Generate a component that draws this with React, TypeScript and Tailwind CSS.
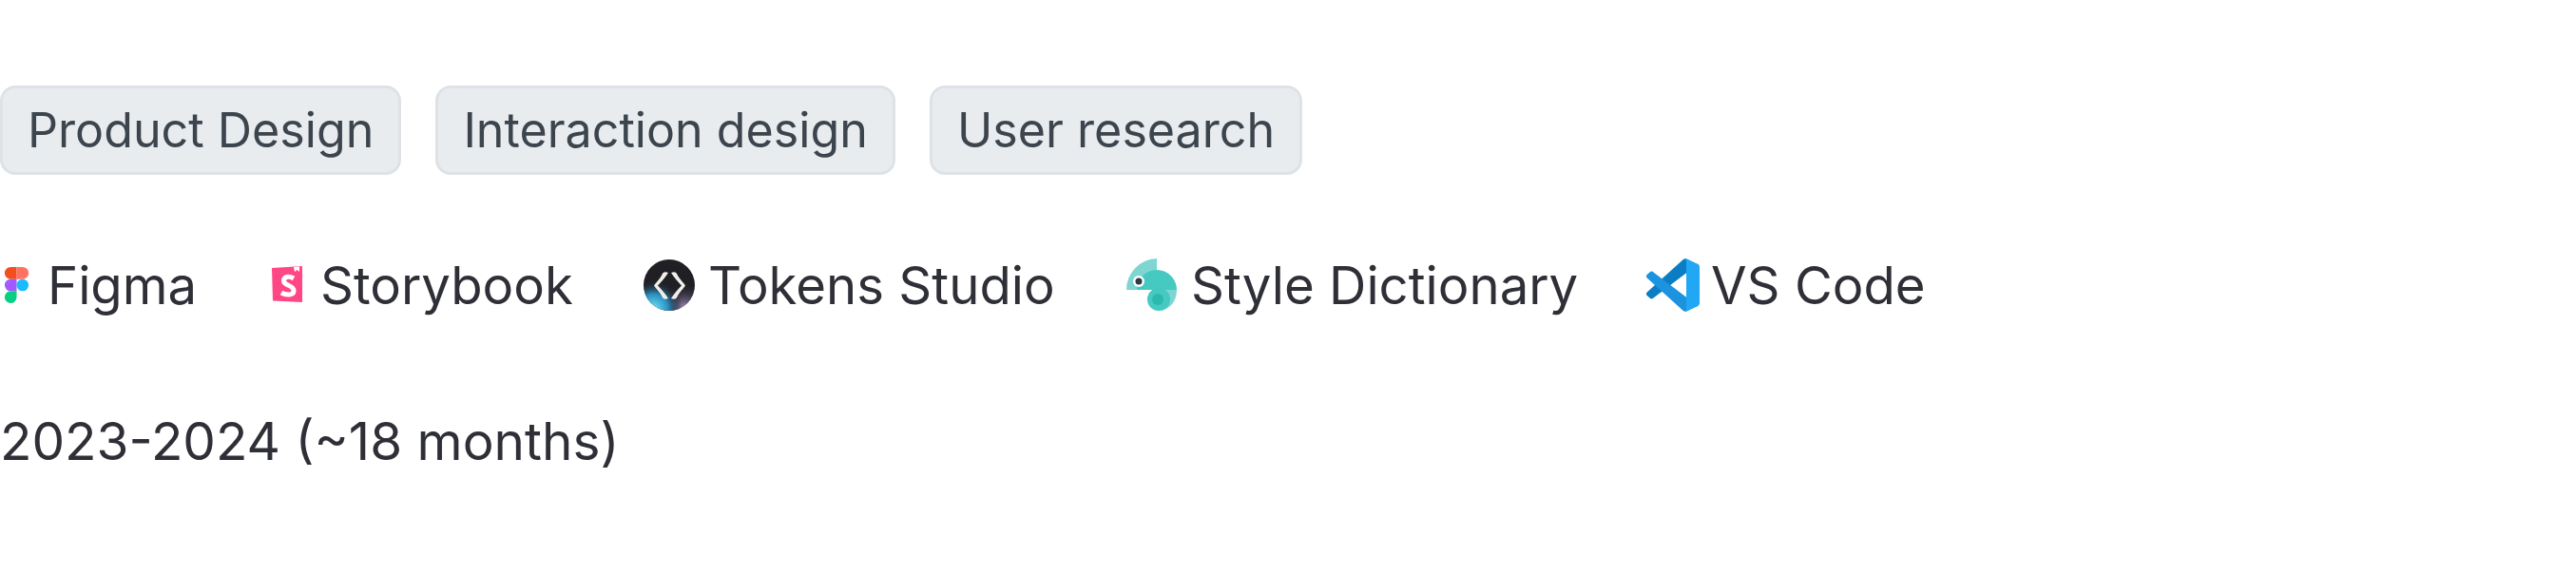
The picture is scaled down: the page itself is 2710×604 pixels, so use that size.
import React from 'react';

const FigmaIcon = () => (
  <svg width="30" height="38" viewBox="0 0 30 38" className="shrink-0">
    <path d="M11.250 0h6.250v12.670h-6.250a6.330 6.330 0 0 1 0-12.670z" fill="#f24e1e" />
    <path d="M17.500 0h6.250a6.330 6.330 0 0 1 0 12.670h-6.250z" fill="#ff7262" />
    <path d="M11.250 12.670h6.250v12.660h-6.250a6.330 6.330 0 0 1 0-12.660z" fill="#a259ff" />
    <circle cx="23.750" cy="19" r="6.330" fill="#1abcfe" />
    <path d="M11.250 25.330h6.250v6.340a6.330 6.330 0 1 1-6.250-6.340z" fill="#0acf83" />
  </svg>
);

const StorybookIcon = () => (
  <svg width="36" height="40" viewBox="0 0 36 40" className="shrink-0">
    <path d="M1 2l32-2v38L2 36.500z" fill="#ff4785" />
    <path d="M24 1l6-.400v5.400l-2.500-2-2.500 2z" fill="#fff" />
    <path
      d="M24 13C19 10 13.500 11 13.500 15.500C13.500 21 24 19.500 24 26C24 31 16 31 11 28"
      fill="none"
      stroke="#fff"
      strokeWidth="5"
    />
  </svg>
);

const TokensIcon = () => (
  <svg width="54" height="54" viewBox="0 0 54 54" className="shrink-0">
    <defs>
      <radialGradient id="tokensBlue" cx="0.2" cy="0.95" r="0.55">
        <stop offset="0" stopColor="#6fe0f5" />
        <stop offset="0.5" stopColor="#2a8fc0" />
        <stop offset="1" stopColor="#201f26" stopOpacity="0" />
      </radialGradient>
      <radialGradient id="tokensPurple" cx="0.8" cy="0.95" r="0.5">
        <stop offset="0" stopColor="#a893c4" />
        <stop offset="1" stopColor="#201f26" stopOpacity="0" />
      </radialGradient>
    </defs>
    <circle cx="27" cy="27" r="27" fill="#201f24" />
    <circle cx="27" cy="27" r="27" fill="url(#tokensPurple)" />
    <circle cx="27" cy="27" r="27" fill="url(#tokensBlue)" />
    <path
      d="M26 14C22 12 20 14 19 17C17 21 13 24 11 27.500C13 31 17 34 19 38C20 41 22 43 26 41C23 36 19 32 15 27.500C19 23 23 19 26 14z"
      fill="#f1efe9"
    />
    <path
      d="M29 14C33 12 35 14 36 17C38 21 42 24 44 27.500C42 31 38 34 36 38C35 41 33 43 29 41C32 36 36 32 40 27.500C36 23 32 19 29 14z"
      fill="#f1efe9"
    />
  </svg>
);

const StyleDictionaryIcon = () => (
  <svg width="56" height="56" viewBox="0 0 56 56" className="shrink-0">
    <path d="M32 0V33H0A33 33 0 0 1 32 0z" fill="#7dd6d2" />
    <path d="M11 33A21 21 0 0 1 53 33z" fill="#45c9c1" />
    <path d="M32 33H53C53 45 46 53 36 55z" fill="#7dd6d2" />
    <circle cx="34" cy="43" r="12" fill="#45c9c1" />
    <circle cx="33" cy="43" r="6" fill="#2db8ae" />
    <circle cx="13" cy="24" r="6" fill="#fff" />
    <circle cx="13" cy="24" r="3.500" fill="#2e3a44" />
  </svg>
);

const VsCodeIcon = () => (
  <svg width="56" height="56" viewBox="0 0 100 100" className="shrink-0">
    <path
      d="M96.461 10.796L75.857.876C73.472-.273 70.622.212 68.750 2.083L1.299 63.583c-1.815 1.654-1.813 4.511.004 6.162l5.510 5.009c1.485 1.350 3.722 1.450 5.321.237L93.361 13.370C96.086 11.303 100 13.246 100 16.667v-.240c0-2.401-1.375-4.590-3.539-5.631z"
      fill="#0b7dc4"
    />
    <path
      d="M96.461 89.204L75.857 99.124c-2.385 1.149-5.235.664-7.107-1.207L1.299 36.417c-1.815-1.654-1.813-4.511.004-6.162l5.510-5.009c1.485-1.350 3.722-1.450 5.321-.237L93.361 86.630C96.086 88.697 100 86.754 100 83.333v.240c0 2.401-1.375 4.590-3.539 5.631z"
      fill="#1b93df"
    />
    <path
      d="M75.858 99.126c-2.386 1.148-5.236.663-7.108-1.209C71.056 100.223 75 98.590 75 95.328V4.672c0-3.262-3.944-4.895-6.250-2.589C70.622.211 73.472-.274 75.858.874l20.601 9.907C98.623 11.822 100 14.011 100 16.413v67.174c0 2.402-1.377 4.591-3.541 5.633z"
      fill="#22a7f5"
    />
  </svg>
);

const skills = ['Product Design', 'Interaction design', 'User research'];

const tools = [
  { name: 'Figma', icon: <FigmaIcon />, gap: 'gap-[20px]', w: 'w-[285px]' },
  { name: 'Storybook', icon: <StorybookIcon />, gap: 'gap-[16px]', w: 'w-[392px]' },
  { name: 'Tokens Studio', icon: <TokensIcon />, gap: 'gap-[14px]', w: 'w-[508px]' },
  { name: 'Style Dictionary', icon: <StyleDictionaryIcon />, gap: 'gap-[12px]', w: 'w-[547px]' },
  { name: 'VS Code', icon: <VsCodeIcon />, gap: 'gap-[12px]', w: 'w-auto' },
];

export default function App() {
  return (
    <div className="w-[2710px] h-[604px] bg-white pt-[90px] font-['Inter',sans-serif] overflow-hidden">
      <div className="flex gap-[36px]">
        {skills.map((skill) => (
          <span
            key={skill}
            className="h-[94px] px-[26px] flex items-center rounded-[16px] border-[3px] border-[#dee2e6] bg-[#e9ecef] text-[#3c454d] text-[50.2px] leading-none"
          >
            {skill}
          </span>
        ))}
      </div>

      <div className="flex items-center mt-[86px] h-[60px]">
        {tools.map((tool) => (
          <div key={tool.name} className={`flex items-center ${tool.gap} ${tool.w}`}>
            {tool.icon}
            <span className="text-[54.5px] leading-none text-[#2f3037]">{tool.name}</span>
          </div>
        ))}
      </div>

      <p className="mt-[104px] text-[54.9px] leading-[60px] text-[#2f3037]">2023-2024 (~18 months)</p>
    </div>
  );
}
